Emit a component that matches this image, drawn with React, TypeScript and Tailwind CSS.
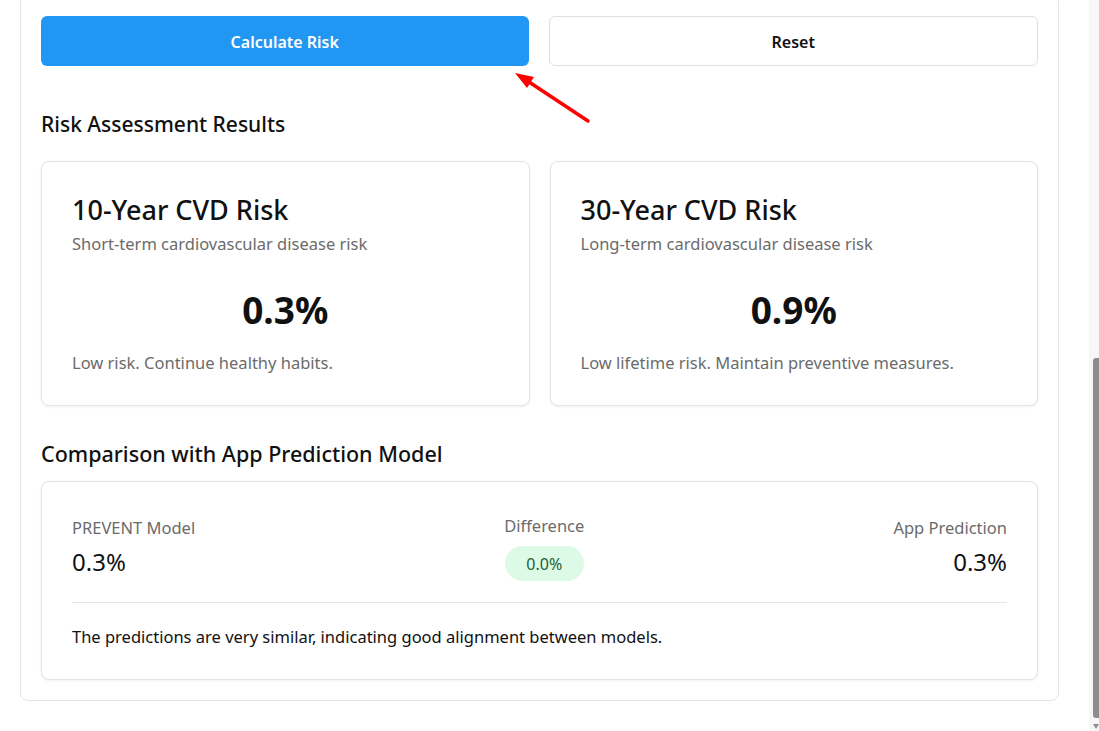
import React from "react";

const font = { fontFamily: '"Noto Sans", "Open Sans", sans-serif' };

function RiskCard({ title, subtitle, value, note }: { title: string; subtitle: string; value: string; note: string }) {
  return (
    <div className="flex-1 rounded-lg border border-[#e3e3e3] bg-white px-[30px] pt-[30px] pb-[30px] shadow-[0_1px_3px_rgba(0,0,0,0.06)]">
      <h3 className="text-[27px] font-medium leading-[36px] text-[#111]">{title}</h3>
      <p className="mt-[4px] text-[16.5px] leading-[24px] text-[#6b6b6b]">{subtitle}</p>
      <div className="mt-[30px] text-center text-[37px] font-bold leading-[48px] text-[#111]">{value}</div>
      <p className="mt-[17px] text-[16.5px] leading-[24px] text-[#6b6b6b]">{note}</p>
    </div>
  );
}

export default function App() {
  return (
    <div className="relative h-[731px] overflow-hidden bg-white" style={font}>
      <div className="ml-[20px] -mt-[5px] w-[1039px] rounded-lg border border-[#e5e5e5] bg-white p-5">
        <div className="flex gap-5">
          <button className="h-[50px] flex-1 rounded-md bg-[#2196f3] pt-[2px] text-[16px] font-semibold text-white">Calculate Risk</button>
          <button className="h-[50px] flex-1 rounded-md border border-[#e0e0e0] bg-white pt-[2px] text-[16px] font-semibold text-[#111]">Reset</button>
        </div>

        <h2 className="mt-[44px] text-[21px] font-medium leading-[28px] text-[#111]">Risk Assessment Results</h2>
        <div className="mt-[23px] flex gap-5">
          <RiskCard title="10-Year CVD Risk" subtitle="Short-term cardiovascular disease risk" value="0.3%" note="Low risk. Continue healthy habits." />
          <RiskCard title="30-Year CVD Risk" subtitle="Long-term cardiovascular disease risk" value="0.9%" note="Low lifetime risk. Maintain preventive measures." />
        </div>

        <h2 className="mt-[34px] text-[21.5px] font-medium leading-[28px] text-[#111]">Comparison with App Prediction Model</h2>
        <div className="mt-[13px] rounded-lg border border-[#e3e3e3] bg-white px-[30px] pt-[34px] pb-[30px] shadow-[0_1px_3px_rgba(0,0,0,0.06)]">
          <div className="flex items-start justify-between">
            <div>
              <div className="text-[16.5px] leading-[24px] text-[#6b6b6b]">PREVENT Model</div>
              <div className="mt-[7px] text-[24px] leading-[30px] text-[#111]">0.3%</div>
            </div>
            <div className="-mt-[2px] flex flex-col items-center">
              <div className="text-[16.5px] leading-[24px] text-[#6b6b6b]">Difference</div>
              <div className="mt-[8px] flex h-[35px] w-[79px] items-center justify-center rounded-full bg-[#dcfae6] text-[16px] text-[#1d5f3a]">0.0%</div>
            </div>
            <div className="text-right">
              <div className="text-[16.5px] leading-[24px] text-[#6b6b6b]">App Prediction</div>
              <div className="mt-[7px] text-[24px] leading-[30px] text-[#111]">0.3%</div>
            </div>
          </div>
          <div className="mt-[21px] h-px bg-[#e5e5e5]" />
          <p className="mt-[22px] text-[16.5px] leading-[24px] text-[#111]">The predictions are very similar, indicating good alignment between models.</p>
        </div>
      </div>

      {/* red annotation arrow */}
      <svg className="pointer-events-none absolute left-0 top-0" width="1099" height="731">
        <line x1="588" y1="121" x2="526" y2="80" stroke="#ff0000" strokeWidth="3.5" strokeLinecap="round" />
        <polygon points="515,73 534,77 527,88" fill="#ff0000" />
      </svg>

      {/* scrollbar */}
      <div className="absolute right-0 top-0 h-full w-[10px] bg-[#f7f7f7]">
        <div className="absolute right-0 top-[358px] h-[360px] w-[6px] rounded-l-[3px] bg-[#8c8c8c]" />
        <div className="absolute bottom-[2px] right-[0px] h-0 w-0 border-x-[3px] border-t-[5px] border-x-transparent border-t-[#8c8c8c]" />
      </div>
    </div>
  );
}
